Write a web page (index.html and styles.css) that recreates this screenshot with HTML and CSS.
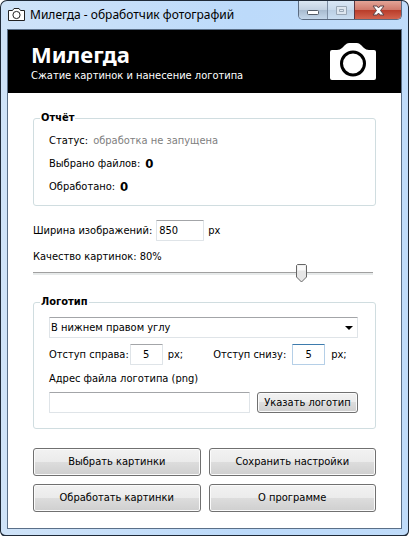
FILE: index.html
```html
<!DOCTYPE html>
<html lang="ru">
<head>
    <meta charset="UTF-8">
    <meta name="viewport" content="width=device-width, initial-scale=1.0">
    <title>Милегда - обработчик фотографий</title>
    <link rel="stylesheet" href="styles.css">
</head>
<body>
    <div class="window">
        <div class="titlebar">
            <svg class="titlebar-icon" width="17" height="14" viewBox="0 0 17 14">
                <path d="M.5 2.500h4l1.500-2h5l1.500 2h4v10h-16z" fill="#fff" stroke="#222"/>
                <circle cx="8.500" cy="7" r="3.600" fill="#fff" stroke="#222"/>
            </svg>
            <span class="titlebar-text">Милегда - обработчик фотографий</span>
            <div class="window-buttons">
                <button type="button" class="win-btn" aria-label="Свернуть">
                    <svg width="28" height="18" viewBox="0 0 28 18"><rect x="8.500" y="9.500" width="11" height="4" rx="1" fill="#fff" stroke="#535b66"/></svg>
                </button>
                <button type="button" class="win-btn win-max" aria-label="Развернуть" disabled>
                    <svg width="26" height="18" viewBox="0 0 26 18"><path d="M8.500 5.500h10v8h-10zM11.500 8.500h4v2h-4z" fill="#dde6ef" stroke="#98a6b5"/></svg>
                </button>
                <button type="button" class="win-btn win-close" aria-label="Закрыть">
                    <svg width="46" height="18" viewBox="0 0 46 18"><path d="M18 5h4l1.500 2 1.500-2h4l-3.500 4.500 3.500 4.500h-4l-1.500-2-1.500 2h-4l3.500-4.500z" fill="#fff" stroke="#5d4448"/></svg>
                </button>
            </div>
        </div>

        <div class="client">
            <header class="header">
                <div>
                    <h1 class="header-title">Милегда</h1>
                    <p class="header-subtitle">Сжатие картинок и нанесение логотипа</p>
                </div>
                <svg class="header-icon" width="46" height="37" viewBox="0 0 46 37">
                    <path d="M2 7h5q3 0 5-2l3-3q2-2 4-2h8q2 0 4 2l3 3q2 2 5 2h5q2 0 2 2v26q0 2-2 2H2q-2 0-2-2V9q0-2 2-2z" fill="#fff"/>
                    <circle cx="23" cy="20.500" r="11.500" fill="#fff" stroke="#000" stroke-width="3"/>
                </svg>
            </header>

            <form class="form">
                <fieldset class="group">
                    <legend>Отчёт</legend>
                    <p class="report-row">Статус: <span class="status">обработка не запущена</span></p>
                    <p class="report-row">Выбрано файлов: <b class="count">0</b></p>
                    <p class="report-row">Обработано: <b class="count">0</b></p>
                </fieldset>

                <div class="width-row">
                    <label for="width">Ширина изображений:</label>
                    <input class="field field-width" type="text" id="width" value="850">
                    <span>px</span>
                </div>

                <div class="quality">
                    <label for="quality">Качество картинок: 80%</label>
                    <input class="slider" type="range" id="quality" min="0" max="100" value="80">
                </div>

                <fieldset class="group group-logo">
                    <legend>Логотип</legend>
                    <select class="position" aria-label="Положение логотипа">
                        <option>В нижнем правом углу</option>
                    </select>
                    <div class="offsets">
                        <div class="offset">
                            <label for="right">Отступ справа:</label>
                            <input class="field field-offset" type="text" id="right" value="5">
                            <span class="unit">px;</span>
                        </div>
                        <div class="offset offset-bottom">
                            <label for="bottom">Отступ снизу:</label>
                            <input class="field field-offset field-active" type="text" id="bottom" value="5">
                            <span class="unit">px;</span>
                        </div>
                    </div>
                    <label class="path-label" for="path">Адрес файла логотипа (png)</label>
                    <div class="path-row">
                        <input class="field field-path" type="text" id="path">
                        <button type="button" class="btn btn-small">Указать логотип</button>
                    </div>
                </fieldset>

                <div class="actions">
                    <button type="button" class="btn">Выбрать картинки</button>
                    <button type="button" class="btn">Сохранить настройки</button>
                    <button type="button" class="btn">Обработать картинки</button>
                    <button type="button" class="btn">О программе</button>
                </div>
            </form>
        </div>
    </div>
</body>
</html>
```
FILE: styles.css
```css
* {
    box-sizing: border-box;
}
body {
    margin: 0;
    background: #fff;
    font-family: Tahoma, "DejaVu Sans Condensed", "DejaVu Sans", sans-serif;
    font-size: 11px;
    line-height: 14px;
    color: #000;
}
h1, p {
    margin: 0;
}
svg {
    display: block;
}
input, select, button {
    font: inherit;
    color: inherit;
}

/* window frame */
.window {
    padding: 0 6px 6px;
    border: 1px solid #1f2a38;
    border-width: 1px 1px 2px;
    border-radius: 7px 7px 6px 6px;
    background: linear-gradient(90deg, #cfe3f8, #bcdafa 60%, #c0dcfa);
}
.titlebar {
    display: flex;
    align-items: center;
    height: 28px;
    padding-left: 1px;
}
.titlebar-text {
    margin-left: 5px;
    font-family: "Segoe UI", "Noto Sans", sans-serif;
    font-size: 12px;
}
.window-buttons {
    display: flex;
    align-self: flex-start;
    margin-left: auto;
    border: 1px solid #5b6b80;
    border-top: 0;
    border-radius: 0 0 5px 5px;
    overflow: hidden;
}
.win-btn {
    padding: 0;
    border: 0;
    background: linear-gradient(#dbe7f3, #c3d2e2 48%, #a7bace 50%, #c4d7ea);
}
.win-max {
    border-left: 1px solid #7d8ea3;
    background: linear-gradient(#d9e7f5, #c8daec 48%, #bacee3 50%, #cadef1);
}
.win-close {
    border-left: 1px solid #5b3640;
    background: linear-gradient(#e3a497, #d07a6c 48%, #b83b29 50%, #d2644f);
}
.client {
    border: 1px solid #5a6f88;
    background: #fff;
}

/* header */
.header {
    display: flex;
    align-items: center;
    justify-content: space-between;
    height: 63px;
    padding: 0 25px 0 23px;
    background: #000;
    color: #fff;
}
.header-title {
    font-family: "Segoe UI", "Noto Sans", sans-serif;
    font-size: 22px;
    line-height: 26px;
}
.header-subtitle {
    margin-top: 2px;
}

.form {
    padding: 18px 25px 16px;
}

/* groups */
.group {
    margin: 0;
    min-width: 0;
    padding: 5px 17px 6px 15px;
    border: 1px solid #d0dde0;
    border-radius: 3px;
}
.group legend {
    margin-left: -9px;
    padding: 0 1px;
    font-weight: bold;
}
.report-row {
    display: flex;
    align-items: center;
    gap: 5px;
    height: 23px;
    padding-bottom: 1px;
}
.status {
    color: #808080;
}
.count {
    font-size: 13px;
}

/* fields */
.field {
    height: 21px;
    padding: 0 2px;
    border: 1px solid #dfe4e8;
    border-top-color: #a3a5a8;
    border-radius: 1px;
    background: #fff;
    outline: none;
}
.width-row {
    display: flex;
    align-items: center;
    gap: 4px;
    margin-top: 14px;
}
.field-width {
    width: 48px;
}
.quality {
    margin-top: 9px;
    padding-right: 3px;
}
.quality label {
    display: block;
}
.slider {
    display: block;
    appearance: none;
    width: 100%;
    height: 18px;
    margin: 0;
    background: none;
}
.slider::-webkit-slider-runnable-track {
    height: 3px;
    border-top: 1px solid #a0a0a0;
    background: #e7eaea;
}
.slider::-webkit-slider-thumb {
    appearance: none;
    width: 11px;
    height: 19px;
    margin-top: -9px;
    background: url("data:image/svg+xml,%3Csvg xmlns='http://www.w3.org/2000/svg' width='11' height='19'%3E%3Cpath d='M1.500 .5h8l1 1v11.500l-5 5-5-5v-11.500z' fill='%23e6e6e6' stroke='%23666'/%3E%3Cpath d='M1.500 1.500h8v5h-8z' fill='%23fafafa'/%3E%3C/svg%3E") no-repeat;
}

/* logo */
.group-logo {
    margin-top: 13px;
    padding: 8px 17px 15px 15px;
}
.position {
    display: block;
    appearance: none;
    width: 100%;
    height: 21px;
    padding: 0 20px 0 1px;
    border: 1px solid #dfe4e8;
    border-top-color: #a3a5a8;
    border-radius: 1px;
    background: #fff url("data:image/svg+xml,%3Csvg xmlns='http://www.w3.org/2000/svg' width='8' height='4'%3E%3Cpath d='M0 0h8l-4 4z'/%3E%3C/svg%3E") no-repeat right 4px center;
}
.offsets {
    display: flex;
    margin-top: 6px;
}
.offset {
    display: flex;
    align-items: center;
    gap: 1px;
}
.offset-bottom {
    margin-left: 30px;
    gap: 6px;
}
.field-offset {
    width: 33px;
    text-align: center;
}
.field-active {
    border-color: #b5cfe7;
    border-top-color: #3d7bad;
}
.offset .unit {
    margin-left: 4px;
}
.offset-bottom .unit {
    margin-left: 0;
}
.path-label {
    display: block;
    margin-top: 7px;
}
.path-row {
    display: flex;
    gap: 7px;
    margin-top: 6px;
}
.field-path {
    flex: 1;
    min-width: 0;
}

/* buttons */
.btn {
    height: 28px;
    padding: 0;
    border: 1px solid #707070;
    border-radius: 3px;
    background: linear-gradient(#f2f2f2, #ebebeb 49%, #dddddd 50%, #cfcfcf);
    box-shadow: inset 0 0 0 1px #fbfbfb;
}
.btn-small {
    width: 101px;
    height: 21px;
}
.actions {
    display: grid;
    grid-template-columns: 1fr 1fr;
    gap: 8px;
    margin-top: 19px;
}
```
